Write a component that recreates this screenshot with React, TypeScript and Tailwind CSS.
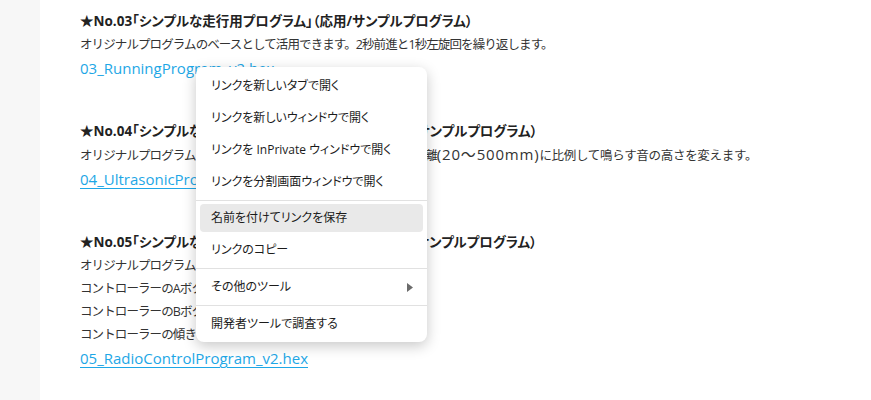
import React from 'react';

const font = '[font-family:"Open_Sans","Noto_Sans_CJK_JP",sans-serif]';

const Section = ({ title, lines, link, underline }: { title: string; lines: React.ReactNode[]; link: string; underline?: boolean }) => (
  <section className="mb-10">
    <h2 className='text-[13.5px] font-bold leading-[23px] text-[#222] [font-feature-settings:"palt"]'>{title}</h2>
    {lines.map((l, i) => (
      <p key={i} className="text-[12.5px] leading-[23px] tracking-[-0.9px] text-[#333]">{l}</p>
    ))}
    <a href="#" className={`text-[15px] leading-[23px] text-[#1ea7e6] ${underline ? 'underline underline-offset-[3px]' : ''}`}>
      {link}
    </a>
  </section>
);

const MenuItem = ({ label, active, sub }: { label: string; active?: boolean; sub?: boolean }) => (
  <div className="h-8 px-1 py-[2px]">
    <div className={`flex h-full items-center justify-between rounded-[4px] pl-[11px] pr-[10px] ${active ? 'bg-[#e9e9e9]' : ''}`}>
      <span className='text-[12px] text-[#1b1b1b] [font-feature-settings:"palt"]'>{label}</span>
      {sub && (
        <svg width="6" height="9" viewBox="0 0 6 9">
          <path d="M0 0 L6 4.5 L0 9 Z" fill="#6b6b6b" />
        </svg>
      )}
    </div>
  </div>
);

const Sep = ({ wide }: { wide?: boolean }) => (
  <div className={wide ? 'py-[2px]' : 'py-[1.5px]'}>
    <div className="h-px bg-[#e1e1e1]" />
  </div>
);

export default function App() {
  return (
    <div className={`relative flex min-h-[400px] bg-white ${font}`}>
      <div className="w-10 shrink-0 bg-[#f7f7f7]" />
      <main className="pl-10 pt-[10px]">
        <Section
          title="★No.03「シンプルな走行用プログラム」（応用/サンプルプログラム）"
          lines={['オリジナルプログラムのベースとして活用できます。2秒前進と1秒左旋回を繰り返します。']}
          link="03_RunningProgram_v2.hex"
        />
        <Section
          title="★No.04「シンプルな超音波センサー用プログラム」（応用/サンプルプログラム）"
          lines={[
            <>
              オリジナルプログラムのベースとして活用できます。障害物との距離
              <span className="text-[15px] tracking-[0.8px]">(20〜500mm)</span>
              <span className="tracking-[-0.3px]">に比例して鳴らす音の高さを変えます。</span>
            </>,
          ]}
          link="04_UltrasonicProgram_v2.hex"
          underline
        />
        <Section
          title="★No.05「シンプルなラジコン操作用のプログラム」（応用/サンプルプログラム）"
          lines={[
            'オリジナルプログラムのラジコン操作版です。',
            'コントローラーのAボタンを押すと前進します。',
            'コントローラーのBボタンを押すと後退します。',
            'コントローラーの傾き',
          ]}
          link="05_RadioControlProgram_v2.hex"
          underline
        />
      </main>

      {/* context menu */}
      <div className="absolute left-[196px] top-[67px] w-[231px] rounded-lg bg-white pt-[3px] pb-[2px] shadow-[0_4px_14px_rgba(0,0,0,0.22)]">
        <MenuItem label="リンクを新しいタブで開く" />
        <MenuItem label="リンクを新しいウィンドウで開く" />
        <MenuItem label="リンクを InPrivate ウィンドウで開く" />
        <MenuItem label="リンクを分割画面ウィンドウで開く" />
        <Sep />
        <MenuItem label="名前を付けてリンクを保存" active />
        <MenuItem label="リンクのコピー" />
        <Sep wide />
        <MenuItem label="その他のツール" sub />
        <Sep wide />
        <MenuItem label="開発者ツールで調査する" />
      </div>
    </div>
  );
}
